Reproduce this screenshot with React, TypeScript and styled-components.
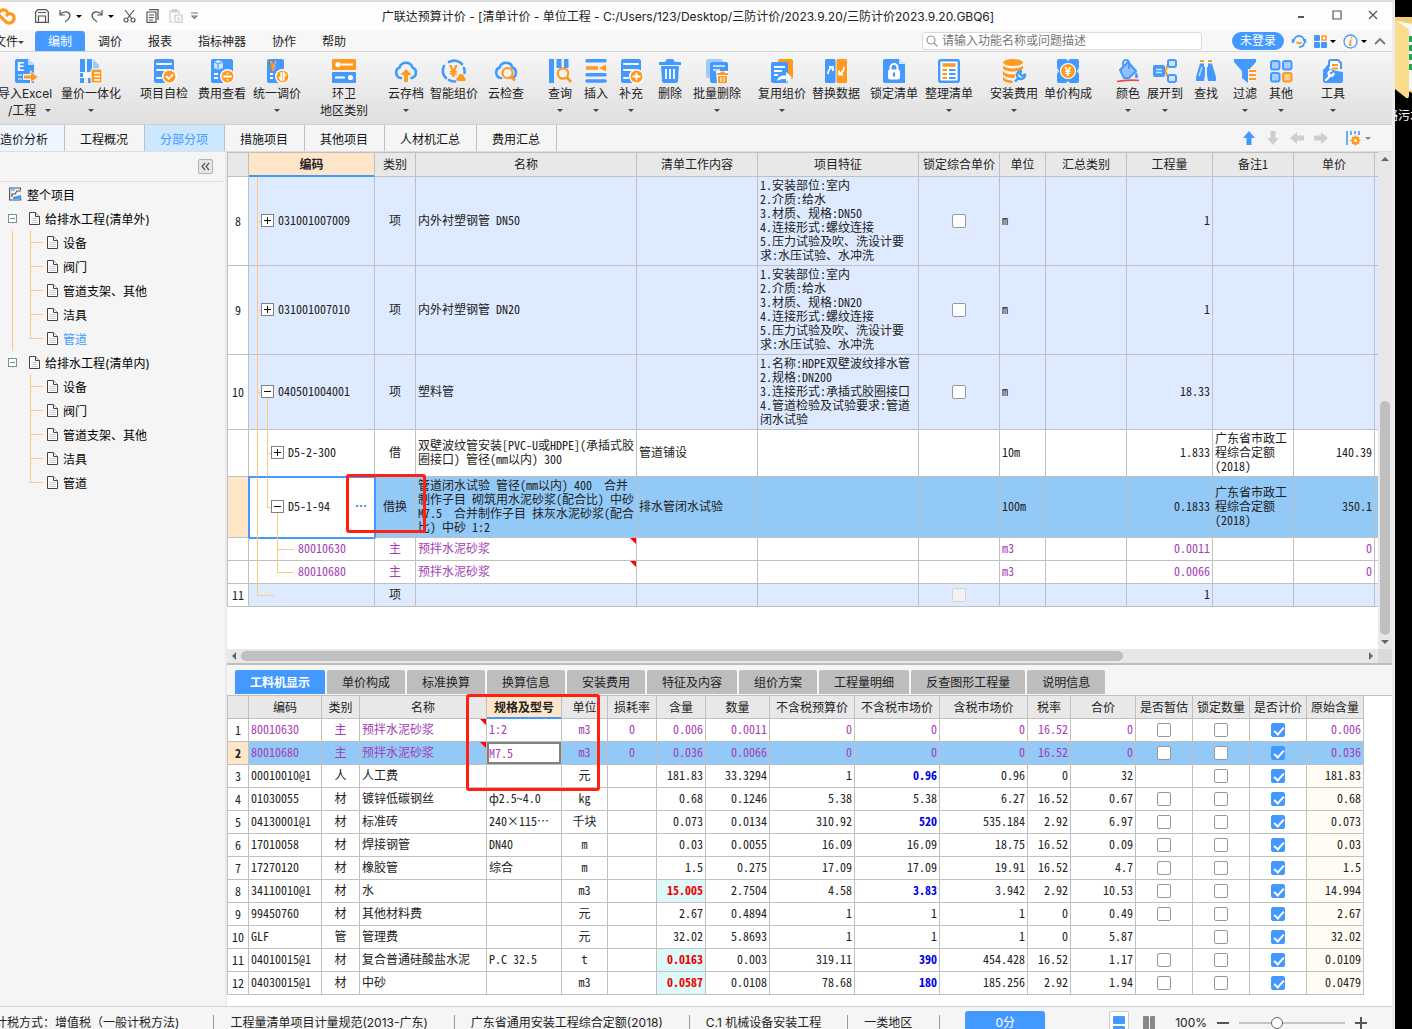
import React from "react";
import styled, { createGlobalStyle, css } from "styled-components";

const BLUE = "#4499ff";
const ORANGE = "#ff9a1e";
const LINE = "#c0c0c0";
const GUIDE = "#ffc87d";
const PURPLE = "#a43cb5";
const UI_FONT = 'Inter, "Noto Sans CJK SC", sans-serif';
const GRID_FONT = '"Noto Sans Mono CJK SC", "Noto Sans CJK SC", "Liberation Mono", monospace';

const Global = createGlobalStyle`
  * { box-sizing: border-box; }
  body { margin: 0; background: #000; font: 12px/16px ${UI_FONT}; color: #222; }
  button, input { font: inherit; color: inherit; }
  button { border: 0; padding: 0; background: none; cursor: pointer; white-space: nowrap; }
`;

/* ---------- shell ---------- */

const Desktop = styled.div`
  display: flex;
  height: 100vh;
  overflow: hidden;
`;
const Shell = styled.div`
  flex: 1;
  min-width: 0;
  display: flex;
  flex-direction: column;
  background: #f5f5f5;
  border-top: 2px solid #dcdcdc;
  border-right: 3px solid #ececec;
  overflow: hidden;
`;
const DesktopStrip = styled.aside`
  flex: none;
  width: 17px;
  padding-top: 17px;
  overflow: hidden;
  color: #fff;
  white-space: nowrap;
  svg { display: block; }
`;
const StripLabel = styled.div`
  margin: 8px 0 0 -9px;
`;

/* ---------- title bar ---------- */

const TitleBar = styled.header`
  flex: none;
  height: 28px;
  display: grid;
  grid-template-columns: 1fr auto 1fr;
  align-items: center;
  background: #fdfdfd;
`;
const QuickBar = styled.div`
  display: flex;
  align-items: center;
  height: 28px;
  svg { display: block; }
`;
const QuickButton = styled.button<{ $gap?: number }>`
  display: flex;
  align-items: center;
  margin-left: ${(p) => p.$gap ?? 0}px;
`;
const Title = styled.h1`
  margin: 0;
  padding: 2px 16px 0 0;
  font-size: 12px;
  font-weight: 400;
  line-height: 26px;
  white-space: nowrap;
`;
const WindowButtons = styled.div`
  display: flex;
  justify-content: flex-end;
  gap: 24px;
  padding-right: 13px;
  padding-bottom: 3px;
  svg { display: block; }
`;

/* ---------- menu ---------- */

const MenuBar = styled.nav`
  flex: none;
  height: 22px;
  display: flex;
  align-items: center;
  padding-top: 1px;
  background: #f7f7f7;
  border-bottom: 1px solid #d6d6d6;
`;
const MenuItems = styled.div`
  display: flex;
  flex: 1;
  margin-left: -6px;
`;
const MenuItem = styled.button<{ $active?: boolean; $first?: boolean }>`
  height: 20px;
  padding: ${(p) => (p.$first ? "2px 11px 0 0" : "2px 13px 0")};
  display: flex;
  align-items: center;
  border-radius: 3px 3px 0 0;
  ${(p) => p.$active && css`background: ${BLUE}; color: #fff;`}
`;
const Caret = styled.i<{ $c?: string }>`
  display: inline-block;
  width: 0;
  height: 0;
  border: 3px solid transparent;
  border-bottom: 0;
  border-top-color: ${(p) => p.$c ?? "#444"};
`;
const SearchBox = styled.label`
  display: flex;
  align-items: center;
  gap: 4px;
  width: 280px;
  height: 18px;
  padding-left: 3px;
  margin-right: 30px;
  background: #fff;
  border: 1px solid #dadada;
  border-radius: 3px;
`;
const SearchInput = styled.input`
  flex: 1;
  min-width: 0;
  height: 16px;
  padding: 0;
  border: 0;
  outline: 0;
  background: transparent;
  &::placeholder { color: #777; opacity: 1; }
`;
const LoginButton = styled.button`
  width: 52px;
  height: 18px;
  border-radius: 9px;
  background: ${BLUE};
  color: #fff;
`;
const AccountTools = styled.div`
  display: flex;
  align-items: center;
  gap: 7px;
  padding-left: 7px;
  padding-right: 6px;
  button { display: flex; align-items: center; gap: 3px; }
`;

/* ---------- ribbon ---------- */

const Ribbon = styled.div`
  flex: none;
  height: 73px;
  display: flex;
  align-items: flex-start;
  padding-top: 7px;
  background: linear-gradient(#f6f6f6, #dfdfdf);
  border-bottom: 1px solid #d0d0d0;
  margin-left: -1px;
`;
const RibbonButton = styled.button<{ $w: number; $before: number }>`
  flex: none;
  width: ${(p) => p.$w}px;
  margin-left: ${(p) => p.$before}px;
  display: flex;
  flex-direction: column;
  align-items: center;
  line-height: 17px;
  svg { display: block; margin-bottom: 2px; overflow: visible; }
`;
const RibbonSecond = styled.span<{ $split?: boolean }>`
  height: 17px;
  display: flex;
  align-items: center;
  align-self: stretch;
  justify-content: ${(p) => (p.$split ? "space-between" : "center")};
  padding-left: ${(p) => (p.$split ? 9 : 0)}px;
`;

/* ---------- page tabs ---------- */

const PageTabs = styled.div`
  flex: none;
  height: 27px;
  display: flex;
  border-bottom: 1px solid #dedede;
`;
const PageTabList = styled.div`
  flex: 1;
  display: flex;
  margin-left: -15px;
`;
const PageTab = styled.button<{ $tone?: "active" | "soft" }>`
  padding: 4px 16px 0 15px;
  border-right: 1px solid ${LINE};
  color: #111;
  ${(p) => p.$tone === "soft" && css`background: #eef5ff;`}
  ${(p) => p.$tone === "active" && css`background: #cce8ff; color: ${BLUE};`}
`;
const PageTools = styled.div`
  display: flex;
  align-items: center;
  gap: 8px;
  padding-right: 21px;
  button { display: flex; align-items: center; gap: 4px; }
  button:last-child { margin-left: 9px; }
`;

/* ---------- body ---------- */

const Body = styled.div`
  flex: 1;
  min-height: 0;
  display: flex;
`;
const Sidebar = styled.aside`
  flex: none;
  width: 227px;
  border-right: 2px solid #ebebeb;
`;
const SidebarHead = styled.div`
  height: 30px;
  margin-right: 2px;
  padding: 7px 10px 0 0;
  display: flex;
  justify-content: flex-end;
  align-items: flex-start;
  border-bottom: 1px solid #dcdcdc;
`;
const CollapseButton = styled.button`
  width: 15px;
  height: 15px;
  display: grid;
  place-items: center;
  border: 1px solid #b4b4b4;
  border-radius: 2px;
  background: #e6e6e6;
`;
const Tree = styled.ul`
  list-style: none;
  margin: 0;
  padding: 1px 0 0;
`;
const TreeNode = styled.li<{ $level: number; $active?: boolean }>`
  position: relative;
  height: 24px;
  display: flex;
  align-items: center;
  gap: 5px;
  padding-top: 2px;
  padding-left: ${(p) => [8, 8, 47][p.$level]}px;
  color: ${(p) => (p.$active ? BLUE : "#000")};
  svg { flex: none; margin-bottom: 4px; }
`;
const TreeToggle = styled.button`
  width: 9px;
  height: 9px;
  margin-right: 7px;
  margin-bottom: 3px;
  display: grid;
  place-items: center;
  border: 1px solid #8a8a8a;
  background: #fff;
  &::after { content: ""; width: 5px; height: 1px; background: #2aa6e0; }
`;
const Guide = styled.i<{ $x: number; $top?: string; $h: string; $w?: number }>`
  position: absolute;
  left: ${(p) => p.$x}px;
  top: ${(p) => p.$top ?? "0"};
  width: ${(p) => p.$w ?? 1}px;
  height: ${(p) => p.$h};
  background: ${GUIDE};
`;

const Main = styled.main`
  flex: 1;
  min-width: 0;
  display: flex;
  flex-direction: column;
`;
const UpperPane = styled.section`
  flex: 1;
  min-height: 0;
  position: relative;
  display: grid;
  grid-template: minmax(0, 1fr) 14px / minmax(0, 1fr) 14px;
  background: #e8e8e8;
  border-bottom: 2px solid #bdbdbd;
`;
const GridArea = styled.div`
  overflow: hidden;
  background: #fff;
  border-top: 1px solid ${LINE};
`;
const VScroll = styled.div`
  display: flex;
  flex-direction: column;
  align-items: center;
`;
const HScroll = styled.div`
  display: flex;
  align-items: center;
`;
const ScrollEnd = styled.button`
  flex: none;
  width: 14px;
  height: 14px;
  display: grid;
  place-items: center;
`;
const Thumb = styled.div<{ $grow: number; $vertical?: boolean }>`
  flex: ${(p) => p.$grow};
  ${(p) => (p.$vertical ? "width" : "height")}: 10px;
  border-radius: 5px;
  background: #bfbfbf;
`;
const Space = styled.div<{ $grow: number }>`
  flex: ${(p) => p.$grow};
`;
const Corner = styled.div`
  background: #dadada;
`;
const LowerPane = styled.section`
  flex: none;
  position: relative;
`;
const DetailTabs = styled.div`
  display: flex;
  gap: 2px;
  padding: 5px 8px 1px;
`;
const DetailTab = styled.button<{ $active?: boolean }>`
  height: 24px;
  padding: 2px 15px 0;
  border-radius: 2px 2px 0 0;
  background: ${(p) => (p.$active ? BLUE : "#bdbdbd")};
  color: ${(p) => (p.$active ? "#fff" : "#222")};
  font-weight: ${(p) => (p.$active ? 700 : 400)};
`;
const DetailArea = styled.div`
  padding-bottom: 11px;
  background: #fff;
  border-top: 1px solid ${LINE};
`;

/* ---------- data tables ---------- */

const Table = styled.table<{ $full?: boolean }>`
  table-layout: fixed;
  width: ${(p) => (p.$full ? "100%" : "0")};
  border-collapse: separate;
  border-spacing: 0;
  font: 12px/14px ${GRID_FONT};
  white-space: pre;
  ${(p) => p.$full && css`
    th { padding-bottom: 2px; }
    th:last-child, td:last-child { border-right: 0; }
  `}
`;
const HeadCell = styled.th<{ $active?: boolean; $corner?: boolean }>`
  padding: 0;
  font-weight: 400;
  background: #e8e8e8;
  border: solid ${LINE};
  border-width: 0 1px 1px ${(p) => (p.$corner ? "1px" : "0")};
  ${(p) => p.$active && css`
    font-weight: 700;
    background: #ffe6c8;
    border-bottom-color: ${BLUE};
    box-shadow: inset 0 -1px ${BLUE};
  `}
`;
const Row = styled.tr<{ $h: number; $bg?: string; $ink?: string }>`
  height: ${(p) => p.$h}px;
  background: ${(p) => p.$bg ?? "#fff"};
  color: ${(p) => p.$ink ?? "#222"};
`;
const Cell = styled.td<{ $align?: "left" | "center" | "right"; $bg?: string; $ink?: string; $strong?: boolean }>`
  position: relative;
  padding: 0 2px 2px;
  text-align: ${(p) => p.$align ?? "left"};
  vertical-align: middle;
  border: solid ${LINE};
  border-width: 0 1px 1px 0;
  ${(p) => p.$bg && css`background: ${p.$bg};`}
  ${(p) => p.$ink && css`color: ${p.$ink};`}
  ${(p) => p.$strong && css`font-weight: 700;`}
`;
const NumberCell = styled(Cell)<{ $current?: boolean }>`
  padding: 0;
  text-align: center;
  border-left-width: 1px;
  color: #222;
  background: ${(p) => (p.$current ? "#ffe6c8" : "#fff")};
`;
const CodeCell = styled(Cell)<{ $editing?: boolean }>`
  ${(p) => p.$editing && css`
    background: #fff;
    outline: 2px solid ${BLUE};
    outline-offset: -1px;
  `}
`;
const CodeLine = styled.div<{ $level: number }>`
  position: relative;
  display: flex;
  align-items: center;
  gap: 4px;
  padding-left: ${(p) => [10, 20, 47][p.$level]}px;
`;
const Expander = styled.button<{ $open?: boolean }>`
  position: relative;
  width: 13px;
  height: 13px;
  border: 1px solid #808080;
  background: #fff;
  &::before, &::after {
    content: "";
    position: absolute;
    left: 2px;
    top: 5px;
    width: 7px;
    height: 1px;
    background: #111;
  }
  &::after { ${(p) => (p.$open ? "display: none;" : "transform: rotate(90deg);")} }
`;
const MoreButton = styled.button`
  margin-left: auto;
  margin-right: 5px;
  color: #2a7fd0;
  font-weight: 700;
`;
const Flag = styled.i`
  position: absolute;
  right: 0;
  top: 0;
  width: 6px;
  height: 6px;
  background: #f00;
  clip-path: polygon(0 0, 100% 0, 100% 100%);
`;
const Check = styled.input`
  appearance: none;
  display: inline-block;
  position: relative;
  width: 14px;
  height: 14px;
  margin: 2px 0 0;
  vertical-align: middle;
  border: 1px solid #999;
  border-radius: 2px;
  background: #fff;
  &:disabled { border-color: #d4d4d4; background: #f2f2f2; }
  &:checked { background: ${BLUE}; border-color: ${BLUE}; }
  &:checked::after {
    content: "";
    position: absolute;
    left: 4px;
    top: 1px;
    width: 4px;
    height: 8px;
    border: solid #fff;
    border-width: 0 2px 2px 0;
    transform: rotate(42deg);
  }
`;
const SpecInput = styled.input`
  display: block;
  width: calc(100% + 4px);
  height: 22px;
  margin: 0 -2px -2px;
  padding: 0 0 2px;
  border: 2px solid #808080;
  outline: 0;
  background: #fff;
`;
const Mark = styled.div<{ $x: number; $y: number; $w: number; $h: number }>`
  position: absolute;
  left: ${(p) => p.$x}px;
  top: ${(p) => p.$y}px;
  width: ${(p) => p.$w}px;
  height: ${(p) => p.$h}px;
  border: 3px solid #ff2010;
  border-radius: 3px;
  pointer-events: none;
`;

/* ---------- status bar ---------- */

const StatusBar = styled.footer`
  flex: none;
  height: 23px;
  overflow: hidden;
  border-top: 1px solid #d2d2d2;
`;
const StatusInner = styled.div`
  height: 31px;
  display: flex;
  align-items: center;
  margin-left: -5px;
  white-space: nowrap;
`;
const StatusText = styled.span<{ $pad: number }>`
  padding-right: ${(p) => p.$pad}px;
  margin-right: 16px;
  border-right: 1px solid #9a9a9a;
`;
const ScoreButton = styled.button`
  width: 80px;
  height: 24px;
  margin-left: 9px;
  border-radius: 3px;
  background: ${BLUE};
  color: #fff;
`;
const ZoomTools = styled.div`
  margin-left: auto;
  padding-right: 25px;
  display: flex;
  align-items: center;
  gap: 10px;
  svg { display: block; }
`;
const ZoomValue = styled.output`
  margin-left: 6px;
`;
const ViewButton = styled.button<{ $on?: boolean }>`
  width: 20px;
  height: 24px;
  display: grid;
  place-items: center;
  border-radius: 2px;
  ${(p) => p.$on && css`background: #fff; border: 1px solid #ccc;`}
`;
const ZoomSlider = styled.input`
  appearance: none;
  width: 106px;
  height: 14px;
  margin: 0;
  background: linear-gradient(#c4c4c4, #c4c4c4) center / 100% 2px no-repeat;
  &::-webkit-slider-thumb {
    appearance: none;
    width: 12px;
    height: 12px;
    border: 1px solid #666;
    border-radius: 50%;
    background: #fff;
  }
`;

/* ---------- icons ---------- */

const Doc = ({ x = 2, w = 20 }: { x?: number; w?: number }) => (
  <rect x={x} y="0" width={w} height="24" rx="2" fill={BLUE} />
);
const Rules = () => (
  <path d="M5 5h14M5 11h9M5 19h4" stroke="#fff" strokeWidth="2" strokeLinecap="round" />
);
const Badge = ({ children }: { children?: React.ReactNode }) => (
  <>
    <circle cx="17.500" cy="17.500" r="7.500" fill="#fff" />
    <circle cx="17.500" cy="17.500" r="6" fill={ORANGE} />
    <g stroke="#fff" strokeWidth="1.800" fill="none" strokeLinecap="round">{children}</g>
  </>
);
const CLOUD = "M7 19a5.500 5.500 0 0 1-1.500-10.500A6.800 6.800 0 0 1 18.500 8.500 5.500 5.500 0 0 1 17.500 19";

const icons: Record<string, React.ReactNode> = {
  excel: (
    <>
      <path d="M4 0h11l6 6v18H4a2 2 0 0 1-2-2V2a2 2 0 0 1 2-2z" fill={BLUE} />
      <path d="M15 0l6 6h-6z" fill="#bcdcff" />
      <text x="4" y="12" fontSize="12" fontWeight="700" fill="#fff">E</text>
      <path d="M5 16h4M5 20h4" stroke="#9cccff" strokeWidth="2" />
      <path d="M10 15h7v-4l8 7-8 7v-4h-7z" fill="#f0f0f0" />
      <path d="M11 16.500h7v-3.500l6.500 5-6.500 5v-3.500h-7z" fill={ORANGE} />
    </>
  ),
  merge: (
    <>
      <path d="M1 0h5v13H1zM8 0h5v13H8z" fill={BLUE} />
      <path d="M14 0l6 6v4h-6z" fill="#9ccbff" />
      <path d="M1 19h4v5H1zM9 19h4v5H9z" fill={BLUE} />
      <path d="M4 14h6v5H4z" fill="#fff" /><path d="M1 14h3v4H1z" fill={BLUE} />
      <rect x="12" y="10" width="11" height="14" rx="1.500" fill={ORANGE} stroke="#fff" />
      <path d="M15 14h6M15 17.500h6M15 21h6" stroke="#fff" strokeWidth="1.400" />
    </>
  ),
  check: <><Doc /><Rules /><Badge><path d="M14.500 17.500l2.300 2.300 3.800-4" /></Badge></>,
  cost: (
    <>
      <Doc w={22} x={1} />
      <path d="M4 3l4-2 5 2v6l-5 2-4-2z" fill="#cfe5ff" /><path d="M8 5v6M4 3l4 2 5-2" stroke={BLUE} fill="none" />
      <path d="M4 15h4M4 19h4" stroke="#fff" strokeWidth="2" />
      <Badge><path d="M14 17.500h7M17.500 14.300v.1M17.500 20.700v.1" /></Badge>
    </>
  ),
  adjust: (
    <>
      <Doc w={17} />
      <text x="4" y="12" fontSize="13" fontWeight="700" fill={ORANGE}>¥</text>
      <path d="M5 15h3M5 19h3" stroke="#fff" strokeWidth="2" />
      <Badge><path d="M16.300 14v7l-2-2.500M18.700 21v-7l2 2.500" /></Badge>
    </>
  ),
  region: (
    <>
      <rect y="0" width="24" height="11" rx="1" fill={ORANGE} />
      <rect y="13" width="24" height="11" rx="1" fill={BLUE} />
      <path d="M9 5.500h12M3 18.500h10" stroke="#fff" strokeWidth="1.800" />
      <circle cx="6" cy="5.500" r="2.600" fill="#fff" /><circle cx="18.500" cy="18.500" r="2.600" fill="#fff" />
    </>
  ),
  cloudUp: (
    <>
      <path d={CLOUD} fill="none" stroke={BLUE} strokeWidth="2.600" strokeLinecap="round" />
      <path d="M12 10l5.500 6H14v7h-4v-7H6.500z" fill={ORANGE} />
    </>
  ),
  smart: (
    <>
      <path d="M7 3a10.500 10.500 0 0 1 13 2M22 9a10 10 0 0 1 .5 5M2 7a10.500 10.500 0 0 0 2 12M7 21a10 10 0 0 0 6 1.500" fill="none" stroke={BLUE} strokeWidth="2.600" strokeLinecap="round" />
      <text x="7" y="18" fontSize="16" fontWeight="700" fill={ORANGE}>¥</text>
      <path d="M15 22a2.500 2.500 0 0 1 1-4 3 3 0 0 1 6 0 2.500 2.500 0 0 1 1 4z" fill={ORANGE} />
    </>
  ),
  cloudFind: (
    <>
      <path d={CLOUD} fill="none" stroke={BLUE} strokeWidth="2.600" strokeLinecap="round" />
      <circle cx="13.500" cy="14" r="5" fill="#f2f2f2" stroke={ORANGE} strokeWidth="2.200" />
      <path d="M17.500 18l3.500 3.500" stroke={ORANGE} strokeWidth="2.800" />
    </>
  ),
  query: (
    <>
      <path d="M1 0h5v24H1zM8.500 0h5v9h-5zM16 0h4.500v9H16z" fill={BLUE} />
      <circle cx="15" cy="14.500" r="5.200" fill="#f2f2f2" stroke={ORANGE} strokeWidth="2.200" />
      <path d="M19 18.500l4 4.500" stroke={ORANGE} strokeWidth="2.800" />
    </>
  ),
  insert: (
    <>
      <path d="M3 1.800h18M3 15.800h18M3 22h18" stroke={BLUE} strokeWidth="3.600" strokeLinecap="round" />
      <path d="M2 9h12" stroke={ORANGE} strokeWidth="3.600" /><path d="M22 5.500v7L15 9z" fill={ORANGE} />
    </>
  ),
  add: <><Doc /><Rules /><Badge><path d="M14.300 17.500h6.400M17.500 14.300v6.400" /></Badge></>,
  trash: (
    <>
      <path d="M1 3h6l2-3h6l2 3h6v3H1zM3 7h18l-1 15a2 2 0 0 1-2 2H6a2 2 0 0 1-2-2z" fill={BLUE} />
      <path d="M8 10v10M12 10v10M16 10v10" stroke="#fff" strokeWidth="1.800" />
    </>
  ),
  batch: (
    <>
      <rect x="1" y="0" width="17" height="19" rx="2" fill="#9fcbff" />
      <rect x="5" y="3" width="18" height="21" rx="2" fill={BLUE} />
      <path d="M8 7h12M8 11h7" stroke="#bcdcff" strokeWidth="1.800" />
      <path d="M11 12h12v12H12z" fill="#fff" />
      <path d="M12 14h3l1-1.500h3l1 1.500h3v2H12zM13 17h9v7h-9z" fill={ORANGE} />
      <path d="M16 18v5M19 18v5" stroke="#fff" />
    </>
  ),
  reuse: (
    <>
      <rect x="8" y="0" width="15" height="20" rx="2" fill={ORANGE} />
      <rect x="1" y="3" width="17" height="21" rx="2" fill={BLUE} />
      <path d="M4 8h11M4 12h8M4 16h4" stroke="#fff" strokeWidth="1.800" />
      <path d="M7 22c1-5 5-6 9-5.500V13l6 5.500-6 4.500v-3c-3 0-6 0-9 2z" fill="#fff" />
    </>
  ),
  swap: (
    <>
      <rect x="1" y="0" width="10.500" height="24" rx="1.500" fill={BLUE} />
      <rect x="12.500" y="0" width="10.500" height="24" rx="1.500" fill={ORANGE} />
      <path d="M4 15c0-3 1-5 4-6.500M5 8h4v4M20 8c0 3-1 5-4 6.500M19 15.500h-4v-4" fill="none" stroke="#fff" strokeWidth="1.800" />
    </>
  ),
  lock: (
    <>
      <path d="M3 0h14l6 5v19H3a2 2 0 0 1-2-2V2a2 2 0 0 1 2-2z" fill={BLUE} />
      <path d="M17 0l6 5h-6z" fill="#d6e9ff" />
      <path d="M8.500 11V8.500a3.500 3.500 0 0 1 7 0V11" stroke="#fff" strokeWidth="2" fill="none" />
      <rect x="6" y="10.500" width="12" height="10" rx="2" fill="#fff" /><path d="M12 13.500v4" stroke={BLUE} strokeWidth="2.200" />
    </>
  ),
  tidy: (
    <>
      <rect x="2.200" y="1.200" width="19.600" height="21.600" rx="1.500" fill="#fff" stroke={BLUE} strokeWidth="2.400" />
      <path d="M5.500 6h13" stroke={ORANGE} strokeWidth="3.600" />
      <path d="M5.500 11h4.500M5.500 15h4.500M5.500 19h4.500" stroke={ORANGE} strokeWidth="2" />
      <path d="M12 11h6.500M12 15h6.500M12 19h6.500" stroke={BLUE} strokeWidth="2" />
    </>
  ),
  coins: (
    <>
      <ellipse cx="11" cy="3.500" rx="10" ry="3.500" fill={ORANGE} />
      <path d="M1 6.500c3 4 17 4 20 0v3c-3 4-17 4-20 0zM1 12c3 4 10 4 13 3l-2 4c-4 0-9-1-11-3zM1 18c2 2.500 6 3.500 9 3.500l1 2.500c-5 0-9-1-10-3z" fill={ORANGE} />
      <path d="M13 22.500l4-4M23 15.500a4 4 0 1 1-4-3.500l-1 3 2 2z" stroke={BLUE} strokeWidth="2.400" fill="#fff" strokeLinejoin="round" />
    </>
  ),
  price: (
    <>
      <path d="M3 0h7l2 2 2-2h7a2 2 0 0 1 2 2v7l-2 3 2 3v7a2 2 0 0 1-2 2h-7l-2-2-2 2H3a2 2 0 0 1-2-2v-7l2-3-2-3V2a2 2 0 0 1 2-2z" fill={BLUE} />
      <circle cx="12" cy="12" r="7.500" fill={ORANGE} stroke="#fff" strokeWidth="1.200" />
      <text x="8.500" y="16.500" fontSize="12" fontWeight="700" fill="#fff">¥</text>
    </>
  ),
  paint: (
    <>
      <path d="M4 11l8-8 8 9-7 7H8z" fill="#8fc3ff" stroke={BLUE} strokeWidth="2" strokeLinejoin="round" />
      <path d="M7 8V4a3 3 0 0 1 6 0v6" fill="none" stroke={BLUE} strokeWidth="1.800" />
      <path d="M20 13c2 3 3 5 1 6s-3-2-1-6z" fill={BLUE} />
      <path d="M1 22.500c7-1 14-2 22-1" stroke="#ee4444" strokeWidth="1.600" fill="none" />
    </>
  ),
  expand: (
    <>
      <path d="M11 12c4 0 2-8 6-8M11 12c4 0 2 8 6 8" stroke={ORANGE} strokeWidth="2" fill="none" />
      <rect x="0" y="6" width="12" height="12" rx="2" fill={BLUE} /><path d="M3 10.500h6M3 13.500h6" stroke="#cfe5ff" strokeWidth="1.600" />
      <rect x="15" y="1" width="8" height="7" rx="2" fill="#cfe5ff" stroke={BLUE} strokeWidth="2" />
      <rect x="15" y="16" width="8" height="7" rx="2" fill="#cfe5ff" stroke={BLUE} strokeWidth="2" />
    </>
  ),
  find: (
    <>
      <path d="M6 2h4M14 2h4" stroke={ORANGE} strokeWidth="2.200" />
      <path d="M6 4.500h4V8h1v8l-1 6H2v-4zM18 4.500h-4V8h-1v8l1 6h8v-4z" fill={BLUE} />
      <path d="M8 8l-3 9" stroke="#bcdcff" strokeWidth="1.400" />
    </>
  ),
  filter: (
    <>
      <path d="M1 0h22v3l-8 9v12l-6-5v-7L1 3z" fill={BLUE} />
      <path d="M15 10h7v14h-7z" fill="#f0f0f0" />
      <path d="M16 12h7M16 16h7M16 20h7" stroke={ORANGE} strokeWidth="2.200" />
    </>
  ),
  other: (
    <g strokeWidth="2" fill="#a6cfff" stroke={BLUE}>
      <rect x="2" y="2" width="8.500" height="8.500" rx="2" /><rect x="14" y="2" width="8.500" height="8.500" rx="2" />
      <rect x="2" y="14" width="8.500" height="8.500" rx="2" />
      <rect x="14" y="14" width="8.500" height="8.500" rx="2" fill="#ffcf91" stroke={ORANGE} />
    </g>
  ),
  tools: (
    <>
      <path d="M8 8V3a2 2 0 0 1 2-2h7l3 3v6" fill="#fff" stroke={BLUE} strokeWidth="2" />
      <path d="M4 9l4-5v6l8 2 6 1v9a2 2 0 0 1-2 2H4a2 2 0 0 1-2-2V11z" fill={BLUE} />
      <path d="M11 6h6M11 9.500h6" stroke={ORANGE} strokeWidth="1.800" />
      <path d="M5 21l5-5M12.500 14.500a2.500 2.500 0 1 1-2.500-2.500" stroke="#fff" strokeWidth="2.200" fill="none" strokeLinecap="round" />
    </>
  ),
};

const ribbon: { icon: string; label: string; w: number; before: number; second?: string; caret?: boolean }[] = [
  { icon: "excel", label: "导入Excel", w: 52, before: 0, second: "/工程", caret: true },
  { icon: "merge", label: "量价一体化", w: 60, before: 10, caret: true },
  { icon: "check", label: "项目自检", w: 48, before: 19 },
  { icon: "cost", label: "费用查看", w: 48, before: 10 },
  { icon: "adjust", label: "统一调价", w: 48, before: 7, caret: true },
  { icon: "region", label: "环卫", w: 48, before: 19, second: "地区类别" },
  { icon: "cloudUp", label: "云存档", w: 36, before: 20, caret: true },
  { icon: "smart", label: "智能组价", w: 48, before: 6 },
  { icon: "cloudFind", label: "云检查", w: 36, before: 10 },
  { icon: "query", label: "查询", w: 24, before: 24, caret: true },
  { icon: "insert", label: "插入", w: 24, before: 12, caret: true },
  { icon: "add", label: "补充", w: 24, before: 11, caret: true },
  { icon: "trash", label: "删除", w: 24, before: 15 },
  { icon: "batch", label: "批量删除", w: 48, before: 11, caret: true },
  { icon: "reuse", label: "复用组价", w: 48, before: 17, caret: true },
  { icon: "swap", label: "替换数据", w: 48, before: 6 },
  { icon: "lock", label: "锁定清单", w: 48, before: 10 },
  { icon: "tidy", label: "整理清单", w: 48, before: 7, caret: true },
  { icon: "coins", label: "安装费用", w: 48, before: 17, caret: true },
  { icon: "price", label: "单价构成", w: 48, before: 6 },
  { icon: "paint", label: "颜色", w: 24, before: 24, caret: true },
  { icon: "expand", label: "展开到", w: 36, before: 7, caret: true },
  { icon: "find", label: "查找", w: 24, before: 11 },
  { icon: "filter", label: "过滤", w: 24, before: 15, caret: true },
  { icon: "other", label: "其他", w: 24, before: 12, caret: true },
  { icon: "tools", label: "工具", w: 24, before: 28, caret: true },
];

const Line = ({ w = 16, h = 16, c = "#555", children }: { w?: number; h?: number; c?: string; children: React.ReactNode }) => (
  <svg width={w} height={h} viewBox={`0 0 ${w} ${h}`} fill="none" stroke={c} strokeWidth="1.200">{children}</svg>
);
const PageIcon = () => (
  <svg width="11" height="13" viewBox="0 0 11 13" fill="#fff" stroke="#444">
    <path d="M.5.500h6l4 4v8H.5z" /><path d="M6.500.500v4h4" /><path d="M2.500 6.500h6M2.500 8.500h6M2.500 10.500h6" stroke="#ccc" />
  </svg>
);
const Triangle = ({ d }: { d: string }) => (
  <svg width="8" height="8" viewBox="0 0 8 8"><path d={d} fill="#666" /></svg>
);
const Arrow = ({ turn, c }: { turn: number; c: string }) => (
  <svg width="16" height="16" viewBox="0 0 16 16">
    <path d="M8 1l6 7h-3.500v7h-5V8H2z" fill={c} transform={`rotate(${turn} 8 8)`} />
  </svg>
);

/* ---------- data ---------- */

const children = ["设备", "阀门", "管道支架、其他", "洁具", "管道"];

const upperCols = [22, 126, 41, 221, 121, 161, 81, 46, 81, 86, 81, 81];
const upperHeads = ["", "编码", "类别", "名称", "清单工作内容", "项目特征", "锁定综合单价", "单位", "汇总类别", "工程量", "备注1", "单价"];

type Upper = {
  no: string; h: number; level: number; code: string; open?: boolean; kind: string; name: string; work?: string;
  feature?: string; lock?: "on" | "off"; unit: string; qty: string; note?: string; price?: string;
  bg?: string; ink?: string; flag?: boolean; editing?: boolean; guides: [number, string, string, number?][];
};
const SOFT = "#deeaff";
const PICKED = "#93c9f7";
const note = "广东省市政工\n程综合定额\n(2018)";
const pipe = (dn: string) =>
  `1.安装部位:室内\n2.介质:给水\n3.材质、规格:${dn}\n4.连接形式:螺纹连接\n5.压力试验及吹、洗设计要\n求:水压试验、水冲洗`;
const upperRows: Upper[] = [
  { no: "8", h: 89, level: 0, code: "031001007009", kind: "项", name: "内外衬塑钢管 DN50", feature: pipe("DN50"), lock: "on", unit: "m", qty: "1", bg: SOFT,
    guides: [[8, "0", "calc(100% + 1px)"], [8, "50%", "1px", 4]] },
  { no: "9", h: 89, level: 0, code: "031001007010", kind: "项", name: "内外衬塑钢管 DN20", feature: pipe("DN20"), lock: "on", unit: "m", qty: "1", bg: SOFT,
    guides: [[8, "0", "calc(100% + 1px)"], [8, "50%", "1px", 4]] },
  { no: "10", h: 75, level: 0, code: "040501004001", open: true, kind: "项", name: "塑料管",
    feature: "1.名称:HDPE双壁波纹排水管\n2.规格:DN200\n3.连接形式:承插式胶圈接口\n4.管道检验及试验要求:管道\n闭水试验", lock: "on", unit: "m", qty: "18.33", bg: SOFT,
    guides: [[8, "0", "calc(100% + 1px)"], [8, "50%", "1px", 4], [18, "50%", "calc(50% + 1px)"]] },
  { no: "", h: 47, level: 1, code: "D5-2-300", kind: "借", name: "双壁波纹管安装[PVC-U或HDPE](承插式胶\n圈接口) 管径(mm以内) 300", work: "管道铺设", unit: "10m", qty: "1.833", note, price: "140.39",
    guides: [[8, "0", "calc(100% + 1px)"], [18, "0", "calc(100% + 1px)"], [18, "50%", "1px", 4]] },
  { no: "", h: 61, level: 1, code: "D5-1-94", open: true, kind: "借换",
    name: "管道闭水试验 管径(mm以内) 400  合并\n制作子目 砌筑用水泥砂浆(配合比) 中砂\nM7.5  合并制作子目 抹灰水泥砂浆(配合\n比) 中砂 1:2",
    work: "排水管闭水试验", unit: "100m", qty: "0.1833", note, price: "350.1", bg: PICKED, editing: true,
    guides: [[8, "0", "calc(100% + 1px)"], [18, "0", "50%"], [18, "50%", "1px", 4], [28, "50%", "calc(50% + 1px)"]] },
  { no: "", h: 23, level: 2, code: "80010630", kind: "主", name: "预拌水泥砂浆", unit: "m3", qty: "0.0011", price: "0", ink: PURPLE, flag: true,
    guides: [[8, "0", "calc(100% + 1px)"], [28, "0", "calc(100% + 1px)"], [28, "50%", "1px", 17]] },
  { no: "", h: 23, level: 2, code: "80010680", kind: "主", name: "预拌水泥砂浆", unit: "m3", qty: "0.0066", price: "0", ink: PURPLE, flag: true,
    guides: [[8, "0", "calc(100% + 1px)"], [28, "0", "50%"], [28, "50%", "1px", 17]] },
  { no: "11", h: 23, level: 2, code: "", kind: "项", name: "", lock: "off", unit: "", qty: "1", bg: SOFT,
    guides: [[8, "0", "50%"], [8, "50%", "1px", 17]] },
];

const lowerCols = [22, 73, 38, 127, 75, 46, 49, 49, 64, 85, 85, 88, 43, 65, 57, 57, 57, 57];
const lowerHeads = ["", "编码", "类别", "名称", "规格及型号", "单位", "损耗率", "含量", "数量", "不含税预算价", "不含税市场价", "含税市场价", "税率", "合价", "是否暂估", "锁定数量", "是否计价", "原始含量"];
const lowerRows = [
  ["80010630", "主", "预拌水泥砂浆", "1:2", "m3", "0", "0.006", "0.0011", "0", "0", "0", "16.52", "0", "0.006"],
  ["80010680", "主", "预拌水泥砂浆", "M7.5", "m3", "0", "0.036", "0.0066", "0", "0", "0", "16.52", "0", "0.036"],
  ["00010010@1", "人", "人工费", "", "元", "", "181.83", "33.3294", "1", "*0.96", "0.96", "0", "32", "181.83"],
  ["01030055", "材", "镀锌低碳钢丝", "ф2.5~4.0", "kg", "", "0.68", "0.1246", "5.38", "5.38", "6.27", "16.52", "0.67", "0.68"],
  ["04130001@1", "材", "标准砖", "240×115⋯", "千块", "", "0.073", "0.0134", "310.92", "*520", "535.184", "2.92", "6.97", "0.073"],
  ["17010058", "材", "焊接钢管", "DN40", "m", "", "0.03", "0.0055", "16.09", "16.09", "18.75", "16.52", "0.09", "0.03"],
  ["17270120", "材", "橡胶管", "综合", "m", "", "1.5", "0.275", "17.09", "17.09", "19.91", "16.52", "4.7", "1.5"],
  ["34110010@1", "材", "水", "", "m3", "", "*15.005", "2.7504", "4.58", "*3.83", "3.942", "2.92", "10.53", "14.994"],
  ["99450760", "材", "其他材料费", "", "元", "", "2.67", "0.4894", "1", "1", "1", "0", "0.49", "2.67"],
  ["GLF", "管", "管理费", "", "元", "", "32.02", "5.8693", "1", "1", "1", "0", "5.87", "32.02"],
  ["04010015@1", "材", "复合普通硅酸盐水泥", "P.C 32.5", "t", "", "*0.0163", "0.003", "319.11", "*390", "454.428", "16.52", "1.17", "0.0109"],
  ["04030015@1", "材", "中砂", "", "m3", "", "*0.0587", "0.0108", "78.68", "*180", "185.256", "2.92", "1.94", "0.0479"],
];

/* ---------- sections ---------- */

const Branch = ({ name, last, active }: { name: string; last?: boolean; active?: string }) => (
  <>
    <TreeNode $level={1}>
      <TreeToggle aria-label={`折叠${name}`} />
      <PageIcon />{name}
    </TreeNode>
    {children.map((c, i) => (
      <TreeNode key={c} $level={2} $active={active === c}>
        {!last && <Guide $x={12} $h="24px" />}
        <Guide $x={30} $h={i === children.length - 1 ? "12px" : "24px"} />
        <Guide $x={30} $top="11px" $h="1px" $w={13} />
        <PageIcon />{c}
      </TreeNode>
    ))}
  </>
);

const UpperTable = () => (
  <Table $full>
    <colgroup>{upperCols.map((w, i) => <col key={i} width={w} />)}<col /></colgroup>
    <thead>
      <Row $h={24}>
        {upperHeads.map((h, i) => <HeadCell key={i} $corner={i === 0} $active={h === "编码"}>{h}</HeadCell>)}
        <HeadCell />
      </Row>
    </thead>
    <tbody>
      {upperRows.map((r, i) => (
        <Row key={i} $h={r.h} $bg={r.bg} $ink={r.ink}>
          <NumberCell $current={r.editing}>{r.no}</NumberCell>
          <CodeCell $editing={r.editing}>
            {r.guides.map(([x, top, h, w], g) => <Guide key={g} $x={x} $top={top} $h={h} $w={w} />)}
            <CodeLine $level={r.level}>
              {r.level < 2 && <Expander $open={r.open} aria-label={r.open ? "折叠" : "展开"} />}
              {r.code}
              {r.editing && <MoreButton aria-label="更多">⋯</MoreButton>}
            </CodeLine>
          </CodeCell>
          <Cell $align="center">{r.kind}</Cell>
          <Cell>{r.name}{r.flag && <Flag />}</Cell>
          <Cell>{r.work}</Cell>
          <Cell>{r.feature}</Cell>
          <Cell $align="center">
            {r.lock && <Check type="checkbox" aria-label="锁定综合单价" disabled={r.lock === "off"} />}
          </Cell>
          <Cell>{r.unit}</Cell>
          <Cell />
          <Cell $align="right">{r.qty}</Cell>
          <Cell>{r.note}</Cell>
          <Cell $align="right">{r.price}</Cell>
          <Cell />
        </Row>
      ))}
    </tbody>
  </Table>
);

const LowerTable = () => (
  <Table>
    <colgroup>{lowerCols.map((w, i) => <col key={i} width={w} />)}</colgroup>
    <thead>
      <Row $h={23}>
        {lowerHeads.map((h, i) => <HeadCell key={i} $corner={i === 0} $active={h === "规格及型号"}>{h}</HeadCell>)}
      </Row>
    </thead>
    <tbody>
      {lowerRows.map((r, n) => {
        const picked = n === 1;
        const [code, kind, name, spec, unit, loss, amount, ...rest] = r;
        const origin = rest.pop();
        const hot = amount.startsWith("*");
        return (
          <Row key={n} $h={23} $bg={picked ? PICKED : undefined} $ink={n < 2 ? PURPLE : undefined}>
            <NumberCell $current={picked} $strong={picked}>{n + 1}</NumberCell>
            <Cell>{code}</Cell>
            <Cell $align="center">{kind}</Cell>
            <Cell>{name}{n < 2 && <Flag />}</Cell>
            <Cell>{picked ? <SpecInput aria-label="规格及型号" defaultValue={spec} /> : spec}</Cell>
            <Cell $align="center">{unit}</Cell>
            <Cell $align="center">{loss}</Cell>
            <Cell $align="right" $bg={hot ? "#dcf8f8" : undefined} $ink={hot ? "#f00000" : undefined} $strong={hot}>
              {amount.replace("*", "")}
            </Cell>
            {rest.map((v, i) => {
              const edited = v.startsWith("*");
              return (
                <Cell key={i} $align="right" $ink={edited ? "#0000e6" : undefined} $strong={edited}>{v.replace("*", "")}</Cell>
              );
            })}
            <Cell $align="center">{n !== 2 && n !== 9 && <Check type="checkbox" aria-label="是否暂估" />}</Cell>
            <Cell $align="center"><Check type="checkbox" aria-label="锁定数量" /></Cell>
            <Cell $align="center"><Check type="checkbox" aria-label="是否计价" defaultChecked /></Cell>
            <Cell $align="right" $bg={n > 1 ? "#fffcf6" : undefined}>{origin}</Cell>
          </Row>
        );
      })}
    </tbody>
  </Table>
);

export default function App() {
  return (
    <Desktop>
      <Global />
      <Shell>
        <TitleBar>
          <QuickBar>
            <svg width="16" height="18" viewBox="0 0 16 18" fill="none" stroke={ORANGE} strokeWidth="3.200" strokeLinecap="round">
              <path d="M-1 5.500C1 2.500 5 2 7 4.500M0 9l5.500 5.500c3 3 8.500 1.500 8.500-3.500 0-4-4.500-5.500-7-3" />
            </svg>
            <QuickButton $gap={19} aria-label="保存">
              <Line w={14} h={14}><path d="M3 .6h8l2.400 2.400v10.400H.6V3zM3.500 13V7h7v6M3 3.500h8" /></Line>
            </QuickButton>
            <QuickButton $gap={10} aria-label="撤销">
              <Line w={12} h={14}><path d="M1 1v5h5M1.500 5.500C4 2 10 2 11 6c0 4-3 5-5 7" /></Line>
            </QuickButton>
            <QuickButton $gap={5} aria-label="撤销列表"><Caret $c="#000" /></QuickButton>
            <QuickButton $gap={9} aria-label="重做">
              <Line w={12} h={14}><path d="M11 1v5H6M10.500 5.500C8 2 2 2 1 6c0 4 3 5 5 7" /></Line>
            </QuickButton>
            <QuickButton $gap={5} aria-label="重做列表"><Caret $c="#000" /></QuickButton>
            <QuickButton $gap={9} aria-label="剪切">
              <Line w={13} h={14}><path d="M2 1l7 9M11 1L4 10" /><circle cx="3" cy="11" r="2" /><circle cx="10" cy="11" r="2" /></Line>
            </QuickButton>
            <QuickButton $gap={10} aria-label="复制">
              <Line w={13} h={14}><path d="M3 .6h9v10.400M1 3h9v10.400H1zM3 6h5M3 8.500h5M3 11h4" /></Line>
            </QuickButton>
            <QuickButton $gap={10} aria-label="粘贴">
              <Line w={14} h={14} c="#ccc"><path d="M4 13H1V2h9v3M3.500.600h4V3h-4zM6 6h7v7.400H6zM8 9h3M8 11h3" /></Line>
            </QuickButton>
            <QuickButton $gap={8} aria-label="自定义">
              <Line w={7} h={8} c="#777"><path d="M0 1h7M1 4l2.500 2.500L6 4z" /></Line>
            </QuickButton>
          </QuickBar>
          <Title>广联达预算计价 - [清单计价 - 单位工程 - C:/Users/123/Desktop/三防计价/2023.9.20/三防计价2023.9.20.GBQ6]</Title>
          <WindowButtons>
            <QuickButton aria-label="最小化"><Line w={12} h={12}><path d="M3 8h6" strokeWidth="2" /></Line></QuickButton>
            <QuickButton aria-label="最大化"><Line w={12} h={12}><path d="M2 2h8v8H2z" /></Line></QuickButton>
            <QuickButton aria-label="关闭"><Line w={12} h={12}><path d="M2 2l8 8M10 2l-8 8" /></Line></QuickButton>
          </WindowButtons>
        </TitleBar>

        <MenuBar>
          <MenuItems>
            <MenuItem $first>文件<Caret /></MenuItem>
            <MenuItem $active>编制</MenuItem>
            {["调价", "报表", "指标神器", "协作", "帮助"].map((m) => <MenuItem key={m}>{m}</MenuItem>)}
          </MenuItems>
          <SearchBox>
            <Line w={12} h={12} c="#999"><circle cx="5" cy="5" r="4" /><path d="M8 8l3.500 3.500" /></Line>
            <SearchInput aria-label="搜索" placeholder="请输入功能名称或问题描述" />
          </SearchBox>
          <LoginButton>未登录</LoginButton>
          <AccountTools>
            <button aria-label="客服">
              <svg width="16" height="16" viewBox="0 0 16 16" fill="none" stroke={BLUE} strokeWidth="1.800">
                <path d="M3 8a5 5 0 0 1 10 0M13 10c0 3-2 4-5 4" /><path d="M2 6v4M14 6v4" strokeWidth="2.400" />
                <path d="M5.500 9c1.500 2 3.500 2 5 0" stroke={ORANGE} />
              </svg>
            </button>
            <button aria-label="应用">
              <svg width="13" height="13" viewBox="0 0 13 13" fill={BLUE}>
                <rect width="6" height="6" rx="1" /><rect y="7" width="6" height="6" rx="1" /><rect x="7" y="7" width="6" height="6" rx="1" />
                <rect x="8" y="1" width="4" height="4" fill="#fff" stroke={ORANGE} strokeWidth="1.500" />
              </svg>
              <Caret $c="#000" />
            </button>
            <button aria-label="关于">
              <svg width="15" height="15" viewBox="0 0 15 15">
                <circle cx="7.500" cy="7.500" r="6.500" fill="none" stroke={BLUE} strokeWidth="1.300" />
                <path d="M8.500 3.500v.2M7.800 6l-1 5h1.400" stroke={ORANGE} strokeWidth="1.600" fill="none" strokeLinecap="round" />
              </svg>
              <Caret $c="#000" />
            </button>
            <button aria-label="收起功能区"><Line w={12} h={12} c="#777"><path d="M1 9l5-5 5 5" strokeWidth="1.800" /></Line></button>
          </AccountTools>
        </MenuBar>

        <Ribbon>
          {ribbon.map((r) => (
            <RibbonButton key={r.label} $w={r.w} $before={r.before}>
              <svg width="24" height="24" viewBox="0 0 24 24" fill="none">{icons[r.icon]}</svg>
              {r.label}
              {(r.second || r.caret) && (
                <RibbonSecond $split={!!(r.second && r.caret)}>{r.second}{r.caret && <Caret />}</RibbonSecond>
              )}
            </RibbonButton>
          ))}
        </Ribbon>

        <PageTabs>
          <PageTabList>
            <PageTab $tone="soft">造价分析</PageTab>
            <PageTab>工程概况</PageTab>
            <PageTab $tone="active">分部分项</PageTab>
            {["措施项目", "其他项目", "人材机汇总", "费用汇总"].map((t) => <PageTab key={t}>{t}</PageTab>)}
          </PageTabList>
          <PageTools>
            <button aria-label="上移"><Arrow turn={0} c={BLUE} /></button>
            <button aria-label="下移"><Arrow turn={180} c="#cfcfcf" /></button>
            <button aria-label="左移"><Arrow turn={270} c="#cfcfcf" /></button>
            <button aria-label="右移"><Arrow turn={90} c="#cfcfcf" /></button>
            <button aria-label="列设置">
              <svg width="15" height="16" viewBox="0 0 15 16">
                <path d="M1 1v14M5 1v4M9 1v3M13 1v4" stroke={BLUE} strokeWidth="1.600" />
                <circle cx="9.500" cy="10.500" r="3" fill="none" stroke={ORANGE} strokeWidth="2.400" />
                <path d="M9.500 5.500v10M4.500 10.500h10M6 7l7 7M13 7l-7 7" stroke={ORANGE} strokeWidth="1.200" />
                <circle cx="9.500" cy="10.500" r="1.500" fill="#fff" />
              </svg>
              <Caret $c="#888" />
            </button>
          </PageTools>
        </PageTabs>

        <Body>
          <Sidebar>
            <SidebarHead>
              <CollapseButton aria-label="收起导航"><Line w={9} h={9}><path d="M4 1L1 4.500 4 8M8 1L5 4.500 8 8" /></Line></CollapseButton>
            </SidebarHead>
            <Tree>
              <TreeNode $level={0}>
                <svg width="14" height="14" viewBox="0 0 14 14" fill="none" stroke="#555" strokeWidth="1.200">
                  <path d="M12.500 3V1H1.600v12h11V9" /><path d="M4 10V7h3l2-3h4" /><path d="M5 12V10l4-1 4-1v4z" fill={BLUE} stroke="none" /><path d="M3 3h4" stroke={BLUE} />
                </svg>
                整个项目
              </TreeNode>
              <Branch name="给排水工程(清单外)" active="管道" />
              <Branch name="给排水工程(清单内)" last />
            </Tree>
          </Sidebar>

          <Main>
            <UpperPane>
              <GridArea><UpperTable /></GridArea>
              <VScroll>
                <ScrollEnd aria-label="向上滚动"><Triangle d="M0 6l4-4 4 4z" /></ScrollEnd>
                <Space $grow={1} />
                <Thumb $vertical $grow={1} />
                <ScrollEnd aria-label="向下滚动"><Triangle d="M0 2l4 4 4-4z" /></ScrollEnd>
              </VScroll>
              <HScroll>
                <ScrollEnd aria-label="向左滚动"><Triangle d="M6 0L2 4l4 4z" /></ScrollEnd>
                <Thumb $grow={882} />
                <Space $grow={241} />
                <ScrollEnd aria-label="向右滚动"><Triangle d="M2 0l4 4-4 4z" /></ScrollEnd>
              </HScroll>
              <Corner />
              <Mark $x={119} $y={322} $w={80} $h={59} />
            </UpperPane>

            <LowerPane>
              <DetailTabs>
                <DetailTab $active>工料机显示</DetailTab>
                {["单价构成", "标准换算", "换算信息", "安装费用", "特征及内容", "组价方案", "工程量明细", "反查图形工程量", "说明信息"].map((t) => (
                  <DetailTab key={t}>{t}</DetailTab>
                ))}
              </DetailTabs>
              <DetailArea><LowerTable /></DetailArea>
              <Mark $x={239} $y={29} $w={134} $h={97} />
            </LowerPane>
          </Main>
        </Body>

        <StatusBar>
          <StatusInner>
            <StatusText $pad={34}>计税方式：增值税（一般计税方法)</StatusText>
            <StatusText $pad={26}>工程量清单项目计量规范(2013-广东)</StatusText>
            <StatusText $pad={26}>广东省通用安装工程综合定额(2018)</StatusText>
            <StatusText $pad={26}>C.1 机械设备安装工程</StatusText>
            <StatusText $pad={27}>一类地区</StatusText>
            <ScoreButton>0分</ScoreButton>
            <ZoomTools>
              <ViewButton $on aria-label="上下视图">
                <svg width="12" height="14" viewBox="0 0 12 14" fill={BLUE}><rect width="12" height="8" rx="1" /><rect y="10" width="12" height="4" rx="1" /></svg>
              </ViewButton>
              <ViewButton aria-label="左右视图">
                <svg width="12" height="14" viewBox="0 0 12 14" fill="#888"><rect width="6" height="14" rx="1" /><rect x="7" width="5" height="14" rx="1" /></svg>
              </ViewButton>
              <ZoomValue>100%</ZoomValue>
              <button aria-label="缩小"><Line w={12} h={12}><path d="M0 6h12" strokeWidth="2" /></Line></button>
              <ZoomSlider type="range" aria-label="缩放" min={0} max={100} defaultValue={34} />
              <button aria-label="放大"><Line w={12} h={12}><path d="M0 6h12M6 0v12" strokeWidth="2" /></Line></button>
            </ZoomTools>
          </StatusInner>
        </StatusBar>
      </Shell>
      <DesktopStrip>
        <svg width="17" height="83" viewBox="0 0 17 83">
          <path d="M0 0h17v76L0 68z" fill="#f0cf75" />
          <path d="M2 4l15 3v66L8 76z" fill="#f7f7f7" />
          <path d="M13 22h4M13 31h4M13 40h4M13 50h4" stroke="#19a85b" strokeWidth="6" />
          <path d="M0 3l12 8c2 1 2 3 2 5v62c0 4-2 4-4 2L0 72z" fill="#fbdc8c" />
        </svg>
        <StripLabel>路污水</StripLabel>
      </DesktopStrip>
    </Desktop>
  );
}
